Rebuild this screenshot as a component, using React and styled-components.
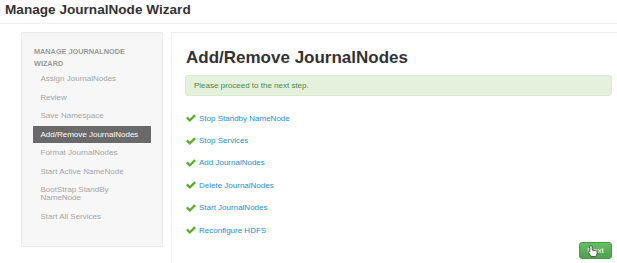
import React from "react";
import styled, { createGlobalStyle } from "styled-components";

const GlobalStyle = createGlobalStyle`
    body {
        margin: 0;
        background: #fff;
        font-family: "Liberation Sans", Arial, sans-serif;
        color: #333;
    }
`;

const Page = styled.div`
    width: 617px;
    height: 263px;
    overflow: hidden;
`;

const TitleBar = styled.h2`
    margin: 0;
    padding: 0 5px;
    height: 23px;
    line-height: 20px;
    font-size: 13.6px;
    font-weight: bold;
    color: #333;
    border-bottom: 1px solid #efefef;
`;

const Body = styled.div`
    display: flex;
    align-items: flex-start;
    gap: 8px;
    padding: 8px 0 0 21px;
`;

const Sidebar = styled.div`
    flex-shrink: 0;
    box-sizing: border-box;
    width: 142px;
    height: 215px;
    padding: 13px 11px 0;
    background: #f7f7f7;
    border: 1px solid #ebebeb;
    border-radius: 2px;
`;

const NavHeader = styled.div`
    padding-left: 1px;
    font-size: 7.3px;
    line-height: 11.7px;
    font-weight: bold;
    text-transform: uppercase;
    color: #9a9a9a;
`;

const NavList = styled.ul`
    list-style: none;
    margin: 0;
    padding: 0;
`;

const NavItem = styled.li`
    margin: 1.5px 0;
    padding: 4.5px 7.5px;
    font-size: 8px;
    line-height: 8px;
    white-space: nowrap;
    color: ${(p) => (p.$active ? "#fff" : "#a6a6a6")};
    background: ${(p) => (p.$active ? "#6a6a6a" : "transparent")};
`;

const Main = styled.div`
    flex-shrink: 0;
    box-sizing: border-box;
    width: 470px;
    height: 260px;
    padding: 15px 28px 0 14px;
    background: #fff;
    border: 1px solid #ededed;
`;

const Heading = styled.h1`
    margin: 0 0 7px;
    font-size: 17px;
    line-height: 20px;
    font-weight: bold;
    color: #333;
`;

const Alert = styled.div`
    box-sizing: border-box;
    height: 21px;
    margin-left: -1px;
    padding: 0 8px;
    line-height: 19px;
    font-size: 8px;
    color: #4f8a45;
    background: #e3f1dd;
    border: 1px solid #d9ebd0;
    border-radius: 3px;
`;

const Steps = styled.ul`
    list-style: none;
    margin: 11px 0 0;
    padding: 0;
`;

const Step = styled.li`
    display: flex;
    align-items: center;
    gap: 3px;
    height: 22.4px;
    font-size: 8px;
    color: #2a8dd4;
`;

const Footer = styled.div`
    display: flex;
    justify-content: flex-end;
    margin-top: 0.8px;
`;

const NextButton = styled.button`
    position: relative;
    width: 33px;
    height: 17px;
    padding: 0;
    font-family: inherit;
    font-size: 8px;
    color: #fff;
    background: linear-gradient(#64c064, #4e9f4e);
    border: 1px solid #4a964a;
    border-radius: 3px;
`;

const Cursor = styled.svg`
    position: absolute;
    left: 8px;
    top: 2px;
`;

const Check = () => (
    <svg width="10" height="8" viewBox="0 0 10 8">
        <path d="M0 4.3 L1.7 2.6 L3.8 4.7 L8.3 0.2 L10 1.9 L3.8 8 Z" fill="#5fae2a" />
    </svg>
);

const navItems = [
    "Assign JournalNodes",
    "Review",
    "Save Namespace",
    "Add/Remove JournalNodes",
    "Format JournalNodes",
    "Start Active NameNode",
    "BootStrap StandBy NameNode",
    "Start All Services",
];

const steps = [
    "Stop Standby NameNode",
    "Stop Services",
    "Add JournalNodes",
    "Delete JournalNodes",
    "Start JournalNodes",
    "Reconfigure HDFS",
];

const App = () => {
    return (
        <Page>
            <GlobalStyle />
            <TitleBar>Manage JournalNode Wizard</TitleBar>
            <Body>
                <Sidebar>
                    <NavHeader>Manage JournalNode<br />Wizard</NavHeader>
                    <NavList>
                        {navItems.map((item) => (
                            <NavItem key={item} $active={item === "Add/Remove JournalNodes"}>
                                {item === "BootStrap StandBy NameNode"
                                    ? <>BootStrap StandBy<br />NameNode</>
                                    : item}
                            </NavItem>
                        ))}
                    </NavList>
                </Sidebar>
                <Main>
                    <Heading>Add/Remove JournalNodes</Heading>
                    <Alert>Please proceed to the next step.</Alert>
                    <Steps>
                        {steps.map((s) => (
                            <Step key={s}>
                                <Check />
                                {s}
                            </Step>
                        ))}
                    </Steps>
                    <Footer>
                        <NextButton>
                            Next
                            <Cursor width="10" height="12" viewBox="0 0 10 12">
                                <path
                                    d="M3 0.5 C3.8 0.5 4.2 1 4.2 1.8 L4.2 5 L8 5.8 C9 6 9.5 6.6 9.3 7.6 L8.6 10 C8.4 11 7.8 11.5 6.8 11.5 L4 11.5 C3.2 11.5 2.6 11 2.2 10.3 L0.6 7.6 C0.2 6.9 0.6 6.2 1.3 6.3 L1.8 6.6 L1.8 1.8 C1.8 1 2.2 0.5 3 0.5 Z"
                                    fill="#fff"
                                    stroke="#333"
                                    strokeWidth="0.8"
                                />
                            </Cursor>
                        </NextButton>
                    </Footer>
                </Main>
            </Body>
        </Page>
    );
};

export default App;
